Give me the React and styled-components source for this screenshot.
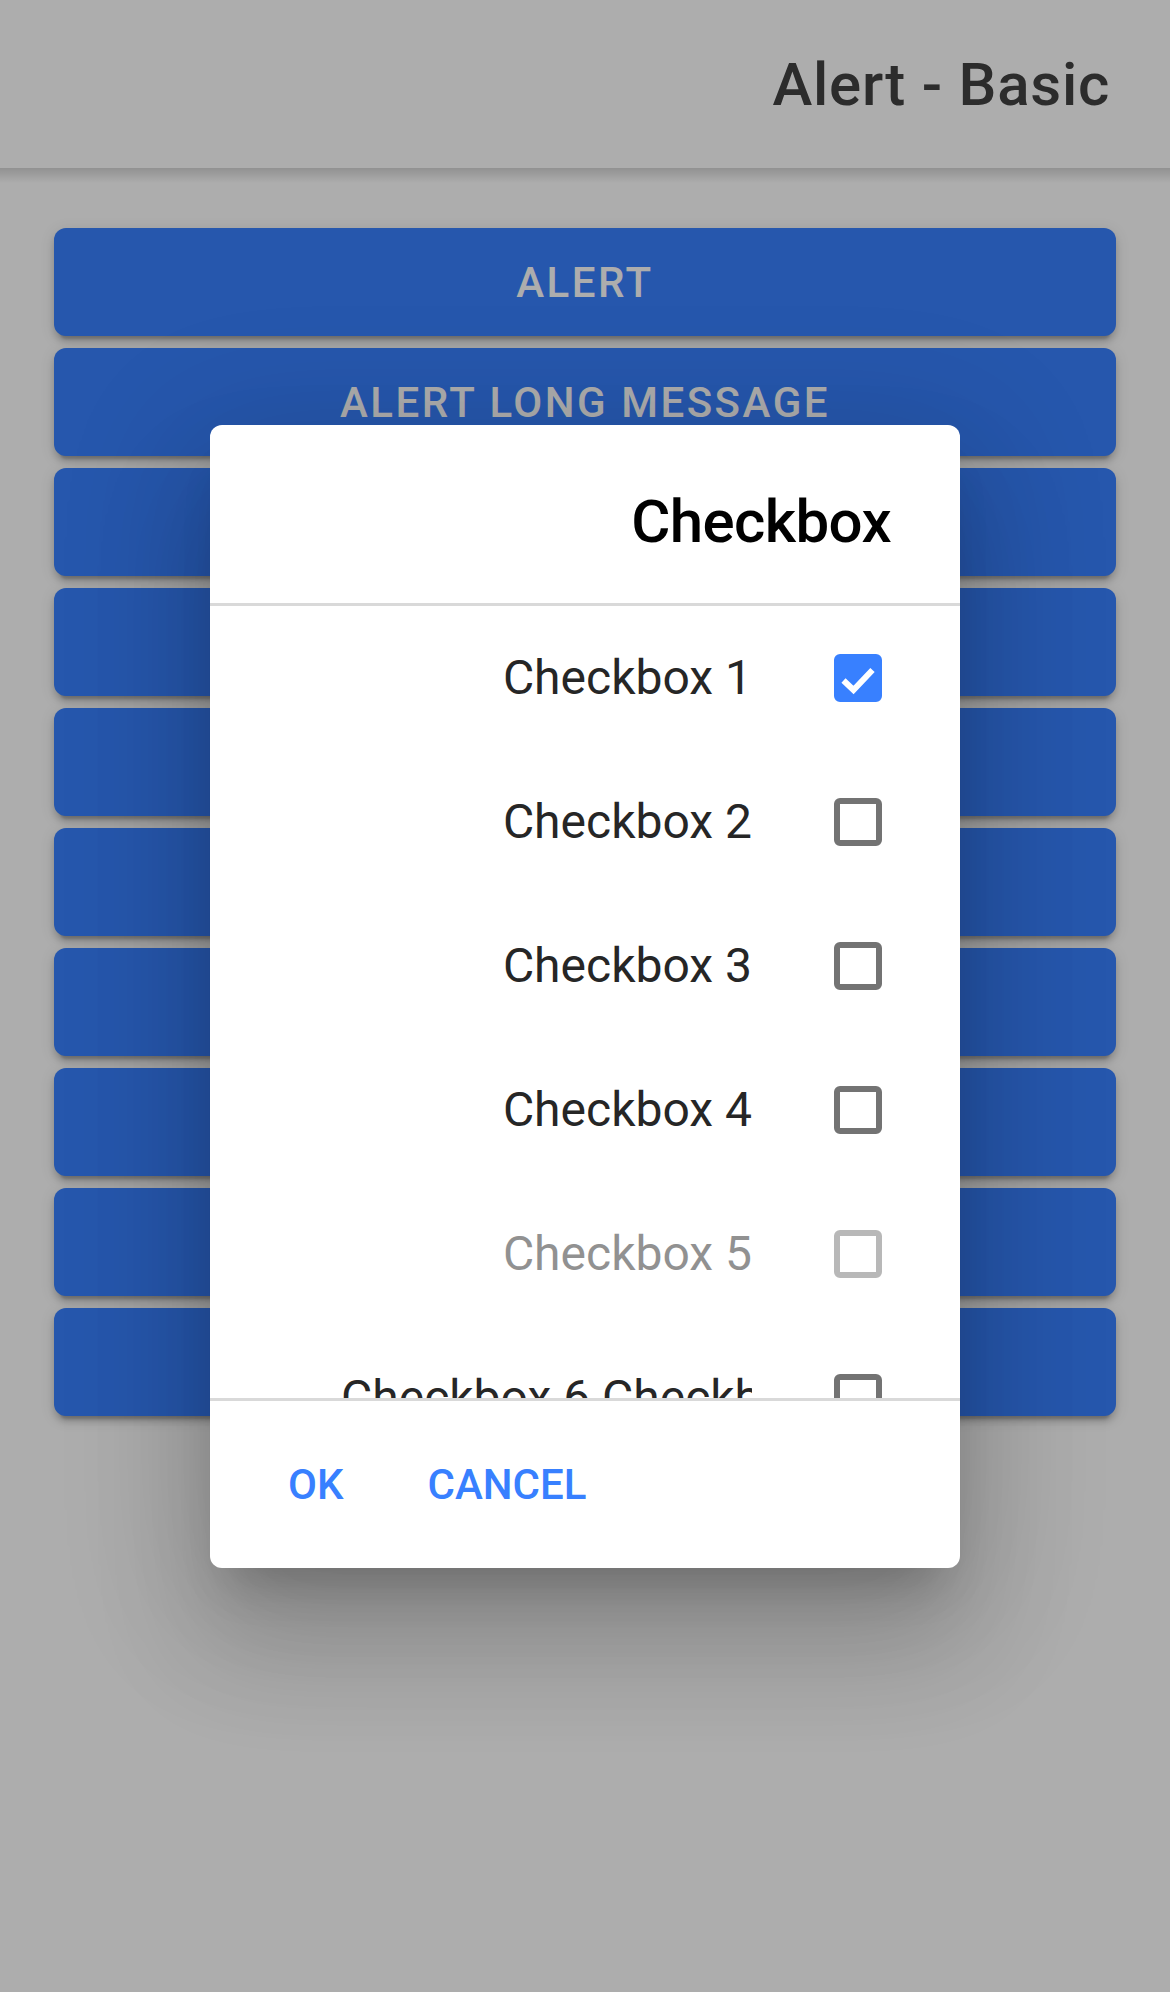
import React from "react";
import styled, { createGlobalStyle } from "styled-components";

const GlobalStyle = createGlobalStyle`
  html, body {
    margin: 0;
    padding: 0;
    background: #fff;
  }
  body {
    font-family: Roboto, "Noto Sans", "Liberation Sans", sans-serif;
    -webkit-font-smoothing: antialiased;
  }
  * {
    box-sizing: border-box;
  }
`;

const pageButtons = [
  "Alert",
  "Alert Long Message",
  "Multiple Buttons (>2)",
  "Alert No Message",
  "Confirm",
  "Prompt",
  "Radio",
  "Checkbox",
  "No Backdrop Dismiss",
  "Translucent",
];

const options = [
  { label: "Checkbox 1", checked: true },
  { label: "Checkbox 2" },
  { label: "Checkbox 3" },
  { label: "Checkbox 4" },
  { label: "Checkbox 5", disabled: true },
  {
    label:
      "Checkbox 6 Checkbox 6 Checkbox 6 Checkbox 6 Checkbox 6 Checkbox 6 Checkbox 6",
  },
];

export default function App() {
  return (
    <Page>
      <GlobalStyle />
      <Toolbar>
        <Title>Alert - Basic</Title>
      </Toolbar>

      <Content>
        {pageButtons.map((label) => (
          <BlockButton key={label}>{label}</BlockButton>
        ))}
      </Content>

      <Backdrop />

      <AlertWrap>
        <Dialog role="dialog">
          <DialogHead>
            <DialogTitle>Checkbox</DialogTitle>
          </DialogHead>

          <CheckGroup>
            {options.map((opt) => (
              <CheckRow key={opt.label} disabled={opt.disabled}>
                <Box checked={opt.checked}>
                  {opt.checked && (
                    <svg width="36" height="36" viewBox="0 0 36 36">
                      <path
                        d="M3.5 20.5 L13.5 30 L32.5 10"
                        fill="none"
                        stroke="#fff"
                        strokeWidth="6"
                      />
                    </svg>
                  )}
                </Box>
                <CheckLabel>{opt.label}</CheckLabel>
              </CheckRow>
            ))}
          </CheckGroup>

          <ButtonGroup>
            <AlertButton>Cancel</AlertButton>
            <AlertButton>Ok</AlertButton>
          </ButtonGroup>
        </Dialog>
      </AlertWrap>
    </Page>
  );
}

const Page = styled.div`
  position: relative;
  width: 1170px;
  height: 1992px;
  overflow: hidden;
  direction: rtl;
  background: #fff;
`;

const Toolbar = styled.header`
  position: relative;
  z-index: 1;
  height: 168px;
  display: flex;
  align-items: center;
  padding: 0 60px;
  background: #fff;

  &::after {
    content: "";
    position: absolute;
    left: 0;
    right: 0;
    bottom: -15px;
    height: 15px;
    background: linear-gradient(rgba(0, 0, 0, 0.16), rgba(0, 0, 0, 0));
  }
`;

const Title = styled.div`
  font-size: 60px;
  font-weight: 500;
  letter-spacing: 0.0125em;
  color: #424242;
`;

const Content = styled.main`
  display: flex;
  flex-direction: column;
  gap: 12px;
  padding: 60px 54px 0;
`;

const BlockButton = styled.button`
  height: 108px;
  border: none;
  border-radius: 12px;
  background: #3880ff;
  color: #fff;
  font-family: Roboto, sans-serif;
  font-size: 42px;
  font-weight: 500;
  letter-spacing: 0.06em;
  text-transform: uppercase;
  box-shadow: 0 9px 3px -6px rgba(0, 0, 0, 0.2),
    0 6px 6px 0 rgba(0, 0, 0, 0.14), 0 3px 15px 0 rgba(0, 0, 0, 0.12);
`;

const Backdrop = styled.div`
  position: absolute;
  inset: 0;
  z-index: 2;
  background: rgba(0, 0, 0, 0.32);
`;

const AlertWrap = styled.div`
  position: absolute;
  inset: 0;
  z-index: 3;
  display: flex;
  align-items: center;
  justify-content: center;
`;

const Dialog = styled.div`
  width: 750px;
  display: flex;
  flex-direction: column;
  background: #fff;
  border-radius: 12px;
  overflow: hidden;
  box-shadow: 0 33px 45px -21px rgba(0, 0, 0, 0.2),
    0 72px 114px 9px rgba(0, 0, 0, 0.14),
    0 27px 138px 24px rgba(0, 0, 0, 0.12);
`;

const DialogHead = styled.div`
  padding: 60px 69px 45px;
`;

const DialogTitle = styled.h2`
  margin: 0;
  font-size: 60px;
  line-height: 73px;
  font-weight: 500;
  letter-spacing: -0.01em;
  color: #000;
`;

const CheckGroup = styled.div`
  height: 798px;
  overflow: hidden;
  border-top: 3px solid #d9d9d9;
  border-bottom: 3px solid #d9d9d9;
`;

const CheckRow = styled.div`
  height: 144px;
  display: flex;
  align-items: center;
  opacity: ${(p) => (p.disabled ? 0.5 : 1)};
`;

const Box = styled.div`
  flex: none;
  width: 48px;
  height: 48px;
  margin-right: 78px;
  display: flex;
  align-items: center;
  justify-content: center;
  border: 6px solid ${(p) => (p.checked ? "#3880ff" : "#737373")};
  border-radius: 6px;
  background: ${(p) => (p.checked ? "#3880ff" : "#fff")};
`;

const CheckLabel = styled.div`
  flex: 1;
  min-width: 0;
  margin-right: 82px;
  margin-left: 131px;
  direction: ltr;
  text-align: right;
  white-space: nowrap;
  overflow: hidden;
  font-size: 48px;
  color: #262626;
`;

const ButtonGroup = styled.div`
  height: 167px;
  display: flex;
  align-items: center;
  justify-content: flex-end;
  padding: 0 24px;
`;

const AlertButton = styled.button`
  margin-left: 24px;
  padding: 30px;
  border: none;
  background: none;
  color: #3880ff;
  font-family: Roboto, sans-serif;
  font-size: 42px;
  font-weight: 500;
  text-transform: uppercase;
`;
